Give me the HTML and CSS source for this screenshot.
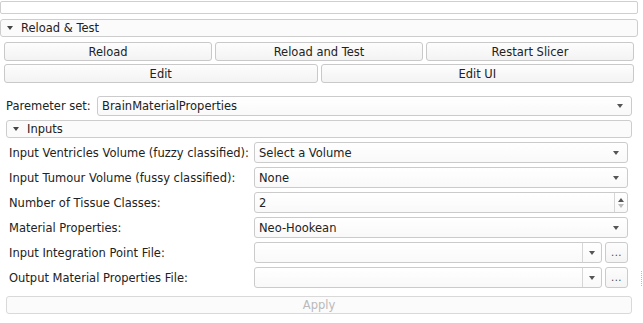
FILE: index.html
```html
<!DOCTYPE html>
<html>
<head>
<meta charset="utf-8">
<link rel="stylesheet" href="styles.css">
</head>
<body>
<div class="page">
  <div class="topbar"></div>
  <div class="section-head head-reload"><span class="tri"></span><span>Reload &amp; Test</span></div>
  <div class="btn-row three">
    <div class="btn">Reload</div>
    <div class="btn">Reload and Test</div>
    <div class="btn">Restart Slicer</div>
  </div>
  <div class="btn-row two">
    <div class="btn">Edit</div>
    <div class="btn">Edit UI</div>
  </div>
  <div class="param-row">
    <span class="param-label">Paremeter set:</span>
    <div class="combo param-combo"><span class="val">BrainMaterialProperties</span><span class="arrow"></span></div>
  </div>
  <div class="section-head head-inputs"><span class="tri"></span><span>Inputs</span></div>
  <div class="form">
    <div class="label">Input Ventricles Volume (fuzzy classified):</div>
    <div class="combo"><span class="val">Select a Volume</span><span class="arrow"></span></div>
    <div class="label">Input Tumour Volume (fussy classified):</div>
    <div class="combo"><span class="val">None</span><span class="arrow"></span></div>
    <div class="label">Number of Tissue Classes:</div>
    <div class="combo spin"><span class="val">2</span><span class="spinbtns"><span class="up"></span><span class="down"></span></span></div>
    <div class="label">Material Properties:</div>
    <div class="combo"><span class="val">Neo-Hookean</span><span class="arrow"></span></div>
    <div class="label">Input Integration Point File:</div>
    <div class="pathrow"><div class="combo path"><span class="val"></span><span class="dropsep"><span class="arrow"></span></span></div><div class="dots">...</div></div>
    <div class="label">Output Material Properties File:</div>
    <div class="pathrow"><div class="combo path"><span class="val"></span><span class="dropsep"><span class="arrow"></span></span></div><div class="dots">...</div></div>
  </div>
  <div class="apply">Apply</div>
  <div class="grip"></div>
</div>
</body>
</html>
```
FILE: styles.css
```css
html, body { margin: 0; padding: 0; background: #ffffff; }
body { font-family: "DejaVu Sans", sans-serif; font-size: 11.5px; color: #222; }
.page { width: 643px; height: 323px; position: relative; overflow: hidden; }
.topbar { margin: 1px 0 0 0; width: 636px; height: 11px; border: 1px solid #cfcfcf; border-radius: 2px; background: #fff; }
.section-head { display: flex; align-items: center; box-sizing: border-box; border: 1px solid #cdcdcd; border-radius: 3px; background: #fbfbfb; }
.head-reload { margin-top: 5px; width: 638px; height: 18px; padding-left: 6px; }
.head-inputs { margin: 4px 0 0 6px; width: 626px; height: 18px; padding-left: 6px; }
.tri { width: 0; height: 0; border-left: 3.5px solid transparent; border-right: 3.5px solid transparent; border-top: 4px solid #444; margin-right: 8px; }
.btn-row { display: grid; gap: 3px; margin-left: 4px; width: 630px; }
.btn-row.three { grid-template-columns: 1fr 1fr 1fr; margin-top: 5px; }
.btn-row.two { grid-template-columns: 1fr 1fr; margin-top: 3px; }
.btn { box-sizing: border-box; height: 19px; border: 1px solid #c9c9c9; border-radius: 3px; background: linear-gradient(#fdfdfd, #f3f3f3); display: flex; align-items: center; justify-content: center; }
.param-row { display: flex; align-items: center; margin: 13px 0 0 6px; width: 626px; }
.param-label { width: 91px; }
.combo { box-sizing: border-box; height: 20px; border: 1px solid #cbcbcb; border-radius: 3px; background: linear-gradient(#ffffff, #f9f9f9); display: flex; align-items: center; padding-left: 4px; }
.param-combo { flex: 1; }
.val { flex: 1; }
.arrow { width: 0; height: 0; border-left: 3.5px solid transparent; border-right: 3.5px solid transparent; border-top: 4px solid #555; margin-right: 8px; }
.form { display: grid; grid-template-columns: 245px 374px; grid-auto-rows: 21px; column-gap: 0; row-gap: 4px; margin: 4px 0 0 9px; align-items: center; }
.form .combo { height: 21px; }
.spin { padding-right: 0; }
.spinbtns { display: flex; flex-direction: column; align-items: center; justify-content: center; gap: 2px; width: 12px; height: 100%; border-left: 1px solid #d6d6d6; }
.up { width: 0; height: 0; border-left: 3px solid transparent; border-right: 3px solid transparent; border-bottom: 4px solid #555; }
.down { width: 0; height: 0; border-left: 3px solid transparent; border-right: 3px solid transparent; border-top: 4px solid #bbb; }
.pathrow { display: flex; gap: 3px; }
.path { flex: 1; padding-right: 0; }
.dropsep { display: flex; align-items: center; justify-content: center; width: 18px; height: 100%; border-left: 1px solid #d6d6d6; }
.dropsep .arrow { margin: 0; }
.dots { box-sizing: border-box; width: 23px; height: 21px; border: 1px solid #cbcbcb; border-radius: 3px; background: linear-gradient(#fdfdfd, #f4f4f4); display: flex; align-items: center; justify-content: center; font-size: 10px; color: #444; letter-spacing: 0.5px; }
.apply { box-sizing: border-box; margin: 8px 0 0 6px; width: 626px; height: 18px; border: 1px solid #d9d9d9; border-radius: 3px; background: #fbfbfb; display: flex; align-items: center; justify-content: center; color: #b9b9b9; }
.grip { position: absolute; left: 641px; top: 271px; width: 1px; height: 15px; border-left: 1px dotted #bbb; }
```
